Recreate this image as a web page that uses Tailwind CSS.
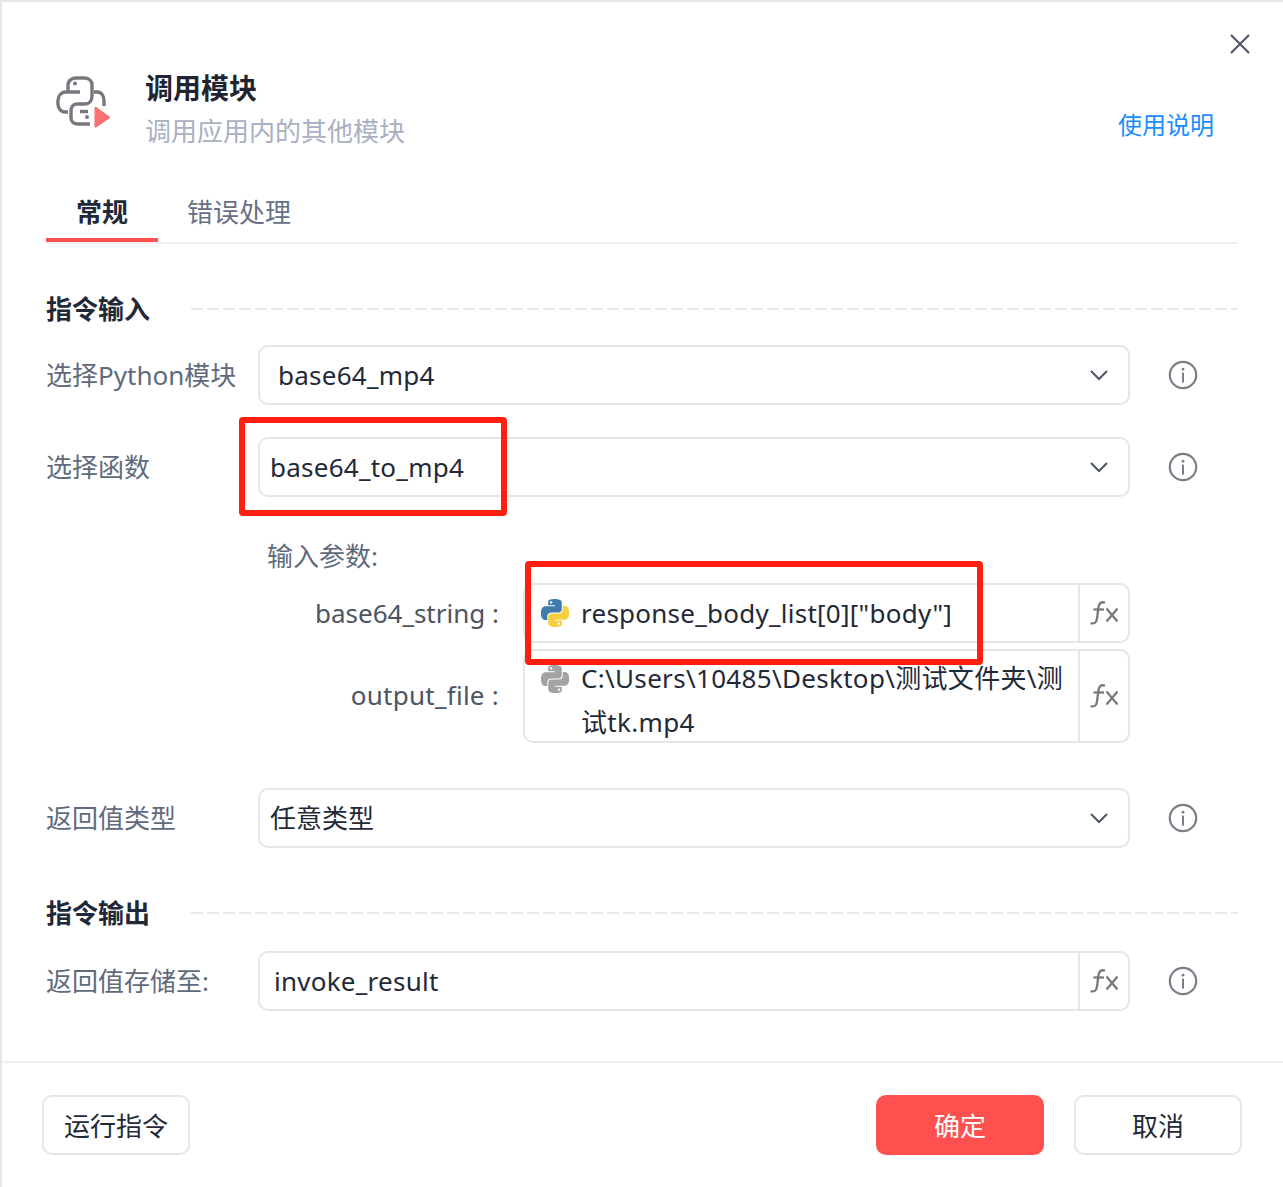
<!DOCTYPE html>
<html lang="zh-CN">
<head>
  <meta charset="UTF-8">
  <title>调用模块</title>
  <script src="https://cdn.jsdelivr.net/npm/@tailwindcss/browser@4"></script>
</head>
<body class="bg-white">
  <svg class="hidden">
    <symbol id="py-top" viewBox="0 0 24 24"><path d="M14.25.18l.9.2.73.26.59.3.45.32.34.34.25.34.16.33.1.3.04.26.02.2-.01.13V8.5l-.05.63-.13.55-.21.46-.26.38-.3.31-.33.25-.35.19-.35.14-.33.1-.3.07-.26.04-.21.02H8.77l-.69.05-.59.14-.5.22-.41.27-.33.32-.27.35-.2.36-.15.37-.1.35-.07.32-.04.27-.02.21v3.06H3.17l-.21-.03-.28-.07-.32-.12-.35-.18-.36-.26-.36-.36-.35-.46-.32-.59-.28-.73-.21-.88-.14-1.05-.05-1.23.06-1.22.16-1.04.24-.87.32-.71.36-.57.4-.44.42-.33.42-.24.4-.16.36-.1.32-.05.24-.01h.16l.06.01h8.16v-.83H6.18l-.01-2.75-.02-.37.05-.34.11-.31.17-.28.25-.26.31-.23.38-.2.44-.18.51-.15.58-.12.64-.1.71-.06.77-.04.84-.02 1.27.05zm-6.3 1.98l-.23.33-.08.41.08.41.23.34.33.22.41.09.41-.09.33-.22.23-.34.08-.41-.08-.41-.23-.33-.33-.22-.41-.09-.41.09z"/></symbol>
    <symbol id="py-bottom" viewBox="0 0 24 24"><path d="M21.1 6.11l.28.06.32.12.35.18.36.27.36.35.35.47.32.59.28.73.21.88.14 1.04.05 1.23-.06 1.23-.16 1.04-.24.86-.32.71-.36.57-.4.45-.42.33-.42.24-.4.16-.36.09-.32.05-.24.02-.16-.01h-8.22v.82h5.84l.01 2.76.02.36-.05.34-.11.31-.17.29-.25.25-.31.24-.38.2-.44.17-.51.15-.58.13-.64.09-.71.07-.77.04-.84.01-1.27-.04-1.07-.14-.9-.2-.73-.25-.59-.3-.45-.33-.34-.34-.25-.34-.16-.33-.1-.3-.04-.25-.02-.2.01-.13v-5.34l.05-.64.13-.54.21-.46.26-.38.3-.32.33-.24.35-.2.35-.14.33-.1.3-.06.26-.04.21-.02.13-.01h5.84l.69-.05.59-.14.5-.21.41-.28.33-.32.27-.35.2-.36.15-.36.1-.35.07-.32.04-.28.02-.21V6.07h2.09l.14.01zm-6.47 14.25l-.23.33-.08.41.08.41.23.33.33.23.41.08.41-.08.33-.23.23-.33.08-.41-.08-.41-.23-.33-.33-.23-.41-.08-.41.08z"/></symbol>
    <symbol id="info" viewBox="0 0 30 30"><circle cx="15" cy="15" r="13.2" fill="none" stroke="currentColor" stroke-width="2.2"/><circle cx="15" cy="9.2" r="1.4" fill="currentColor"/><rect x="14" y="12.6" width="2" height="10" fill="currentColor"/></symbol>
    <symbol id="chev" viewBox="0 0 18 12"><path d="M1 2l8 8 8-8" fill="none" stroke="currentColor" stroke-width="2"/></symbol>
    <symbol id="fx" viewBox="0 0 28 24"><g fill="none" stroke="currentColor" stroke-width="2.3"><path d="M15 1.6C11 .4 9 2.4 8.5 6L7 17.5C6.4 22 3.8 23.2.6 22"/><path d="M3.5 8.5H14"/><path d="M16.5 7.5l11 13M27.5 7.5l-11 13"/></g></symbol>
  </svg>

  <div class="relative flex h-[1187px] w-[1283px] flex-col border-t-2 border-l-2 border-[#e5e5ec] font-['Noto_Sans','Noto_Sans_CJK_SC',sans-serif] text-[26px] text-[#1f2937]">
    <!-- Close -->
    <svg class="absolute top-[32px] right-[33px] h-5 w-5 text-[#4b5563]" viewBox="0 0 20 20"><path d="M1 1l18 18M19 1L1 19" stroke="currentColor" stroke-width="2"/></svg>

    <!-- Header -->
    <div class="flex h-[160px] pt-[66px] pr-[69px] pl-[54px]">
      <svg class="mt-[8px] h-[52px] w-[54px] shrink-0" viewBox="0 0 54 52">
        <g fill="none" stroke="#77777f" stroke-width="3.4">
          <path d="M12 36H9C4.500 36 1.800 32 1.800 26c0-6 3.200-10 8.200-10h14"/>
          <path d="M12 16V9c0-4.500 4-7 8-7h8c5 0 8 3 8 7v11c0 5-3 8-7 8h-8c-4 0-6 3-6 7v7c0 4 3 6 7 6h12"/>
          <path d="M38 16h3c4.600 0 7 4 7 9v5"/>
          <path d="M24 35.500h8"/>
        </g>
        <circle cx="19" cy="7.500" r="2" fill="#77777f"/><circle cx="31" cy="41" r="2" fill="#77777f"/>
        <path d="M38.500 32.500c0-1.500 1-2 2-1.300l13 9.300c.7.500.7 1.300 0 1.800l-13 9c-1 .7-2 .2-2-1.300z" fill="#fb7070"/>
      </svg>
      <div class="ml-[35px] flex-1">
        <div class="text-[28px] leading-[40px] font-bold text-[#1f2530]">调用模块</div>
        <div class="mt-[3px] leading-[40px] text-[#a8b0c2]">调用应用内的其他模块</div>
      </div>
      <a class="mt-[37px] text-[24px] leading-[40px] text-[#1a8cff]">使用说明</a>
    </div>

    <!-- Tabs -->
    <div class="mr-[45px] ml-[44px] flex h-[82px] border-b-2 border-[#eeeef3]">
      <div class="h-[80px] w-[112px] border-b-4 border-[#ff5050] pt-[30px] text-center leading-[40px] font-bold">常规</div>
      <div class="ml-[29px] pt-[30px] leading-[40px] text-[#667085]">错误处理</div>
    </div>

    <!-- Form -->
    <div class="flex-1 pr-[45px] pl-[44px]">
      <div class="mt-[45px] flex h-[40px] items-center">
        <span class="w-[145px] font-bold">指令输入</span>
        <div class="h-[2px] flex-1 bg-[repeating-linear-gradient(to_right,#e8e8ee_0,#e8e8ee_12px,transparent_12px,transparent_16px)]"></div>
      </div>

      <div class="mt-[16px] flex h-[60px] items-center">
        <label class="w-[212px] text-[#5f6b7c]">选择Python模块</label>
        <div class="flex h-full w-[872px] items-center justify-between rounded-[10px] border-2 border-[#e5e5ec] pr-[20px] pl-[18px]"><span class="tracking-[0.25px]">base64_mp4</span><svg class="h-3 w-[18px] text-[#4b5563]"><use href="#chev"/></svg></div>
        <svg class="ml-[38px] h-[30px] w-[30px] text-[#7a7f87]"><use href="#info"/></svg>
      </div>

      <div class="mt-[32px] flex h-[60px] items-center">
        <label class="w-[212px] pt-[1px] text-[#5f6b7c]">选择函数</label>
        <div class="flex h-full w-[872px] items-center justify-between rounded-[10px] border-2 border-[#e5e5ec] pr-[20px] pl-[10px]"><span class="tracking-[0.25px]">base64_to_mp4</span><svg class="h-3 w-[18px] text-[#4b5563]"><use href="#chev"/></svg></div>
        <svg class="ml-[38px] h-[30px] w-[30px] text-[#7a7f87]"><use href="#info"/></svg>
      </div>

      <div class="mt-[39px] ml-[221px] leading-[40px] text-[#5f6b7c]">输入参数:</div>

      <div class="mt-[7px] flex h-[60px] items-center">
        <label class="w-[453px] text-right text-[#4b5563]">base64_string :</label>
        <div class="ml-[24px] flex h-full w-[607px] items-stretch rounded-[10px] border-2 border-[#e5e5ec]">
          <div class="flex flex-1 items-center pl-[16px]">
            <svg class="h-[28px] w-[28px] shrink-0 fill-[#3f7cac]"><use href="#py-top"/></svg>
            <svg class="-ml-[28px] h-[28px] w-[28px] shrink-0 fill-[#f7cf3e]"><use href="#py-bottom"/></svg>
            <span class="ml-[12px] tracking-[0.25px]">response_body_list[0]["body"]</span>
          </div>
          <div class="flex w-[50px] items-center justify-center border-l-2 border-[#e5e5ec] text-[#7a7a7a]"><svg class="h-6 w-7"><use href="#fx"/></svg></div>
        </div>
      </div>

      <div class="mt-[6px] flex h-[94px] items-center">
        <label class="-mt-[2px] w-[453px] text-right tracking-[0.25px] text-[#4b5563]">output_file :</label>
        <div class="ml-[24px] flex h-full w-[607px] items-stretch rounded-[10px] border-2 border-[#e5e5ec]">
          <div class="flex flex-1 items-start pl-[16px]">
            <svg class="mt-[14px] h-[28px] w-[28px] shrink-0 fill-[#a3a3a3]"><use href="#py-top"/></svg>
            <svg class="mt-[14px] -ml-[28px] h-[28px] w-[28px] shrink-0 fill-[#a3a3a3]"><use href="#py-bottom"/></svg>
            <span class="mt-[5px] ml-[12px] leading-[44px] tracking-[0.32px] break-all">C:\Users\10485\Desktop\测试文件夹\测试tk.mp4</span>
          </div>
          <div class="flex w-[50px] items-center justify-center border-l-2 border-[#e5e5ec] text-[#7a7a7a]"><svg class="h-6 w-7"><use href="#fx"/></svg></div>
        </div>
      </div>

      <div class="mt-[45px] flex h-[60px] items-center">
        <label class="w-[212px] pt-[1px] text-[#5f6b7c]">返回值类型</label>
        <div class="flex h-full w-[872px] items-center justify-between rounded-[10px] border-2 border-[#e5e5ec] pr-[20px] pl-[10px]"><span class="pt-[1px]">任意类型</span><svg class="h-3 w-[18px] text-[#4b5563]"><use href="#chev"/></svg></div>
        <svg class="ml-[38px] h-[30px] w-[30px] text-[#7a7f87]"><use href="#info"/></svg>
      </div>

      <div class="mt-[45px] flex h-[40px] items-center">
        <span class="w-[145px] font-bold">指令输出</span>
        <div class="h-[2px] flex-1 bg-[repeating-linear-gradient(to_right,#e8e8ee_0,#e8e8ee_12px,transparent_12px,transparent_16px)]"></div>
      </div>

      <div class="mt-[18px] flex h-[60px] items-center">
        <label class="w-[212px] text-[#5f6b7c]">返回值存储至:</label>
        <div class="flex h-full w-[872px] items-stretch rounded-[10px] border-2 border-[#e5e5ec]">
          <div class="flex flex-1 items-center pl-[14px] tracking-[0.25px]">invoke_result</div>
          <div class="flex w-[50px] items-center justify-center border-l-2 border-[#e5e5ec] text-[#7a7a7a]"><svg class="h-6 w-7"><use href="#fx"/></svg></div>
        </div>
        <svg class="ml-[38px] h-[30px] w-[30px] text-[#7a7f87]"><use href="#info"/></svg>
      </div>
    </div>

    <!-- Footer -->
    <div class="flex h-[126px] justify-between border-t-2 border-[#eeeef3] pt-[32px] pr-[41px] pl-[40px]">
      <button class="h-[60px] w-[148px] rounded-[10px] border-2 border-[#e5e5ec] pt-[2px]">运行指令</button>
      <div class="flex gap-[30px]">
        <button class="h-[60px] w-[168px] rounded-[10px] bg-[#ff5050] pt-[2px] text-white">确定</button>
        <button class="h-[60px] w-[168px] rounded-[10px] border-2 border-[#e5e5ec] pt-[2px]">取消</button>
      </div>
    </div>

    <!-- Red annotations drawn over the screenshot -->
    <div class="absolute top-[415px] left-[237px] h-[99px] w-[268px] rounded-[4px] border-[6px] border-[#ff1f10]"></div>
    <div class="absolute top-[559px] left-[523px] h-[104px] w-[458px] rounded-[4px] border-[6px] border-[#ff1f10]"></div>
  </div>
</body>
</html>
